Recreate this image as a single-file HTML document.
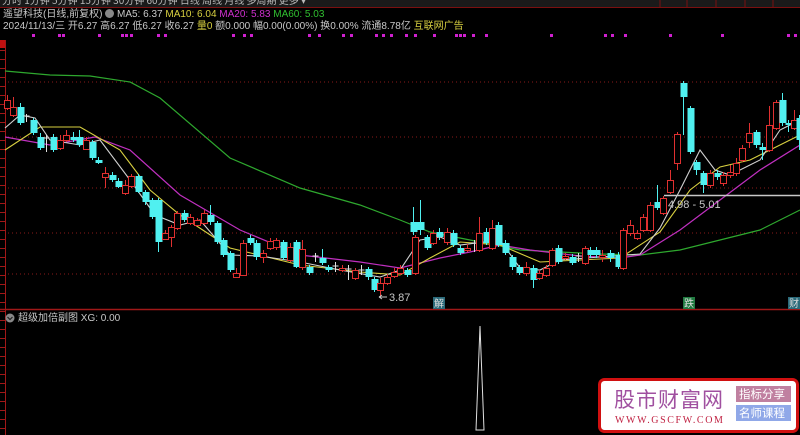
<!DOCTYPE html>
<html><head><meta charset="utf-8"><style>
html,body{margin:0;padding:0;background:#000;width:800px;height:435px;overflow:hidden}
body{position:relative;font-family:"Liberation Sans","Noto Sans CJK SC",sans-serif}
.t{position:absolute;white-space:nowrap;font-size:10px;line-height:12px}
</style></head><body>
<svg id="s" width="800" height="435" style="position:absolute;left:0;top:0" xmlns="http://www.w3.org/2000/svg">
<rect width="800" height="435" fill="#000"/>
<g fill="#1a1a1a"><rect x="0" y="0" width="800" height="7"/></g>
<text x="2" y="4" fill="#bbb" font-size="10" font-family="Noto Sans CJK SC">分时  1分钟  5分钟  15分钟  30分钟  60分钟  日线  周线  月线  多周期  更多 ▾</text>
<g stroke="#7a1010" stroke-width="1"><line x1="660" y1="0" x2="660" y2="7"/><line x1="687" y1="0" x2="687" y2="7"/><line x1="716" y1="0" x2="716" y2="7"/><line x1="745" y1="0" x2="745" y2="7"/><line x1="773" y1="0" x2="773" y2="7"/></g>
<line x1="0" y1="7.5" x2="800" y2="7.5" stroke="#7a1010"/>
<g stroke="#8a1a1a" stroke-dasharray="1,3"><line x1="8" y1="82" x2="800" y2="82"/><line x1="8" y1="137" x2="800" y2="137"/><line x1="8" y1="188" x2="800" y2="188"/><line x1="8" y1="233" x2="800" y2="233"/><line x1="8" y1="274" x2="800" y2="274"/></g>
<line x1="0" y1="309.5" x2="800" y2="309.5" stroke="#a01818" stroke-width="1.5"/>
<line x1="5.5" y1="40" x2="5.5" y2="435" stroke="#a01818"/>
<rect x="0" y="40" width="5" height="8" fill="#c01010"/>
<g id="ticks" stroke="#a01818"></g>
<polyline fill="none" stroke="#2ea82e" stroke-width="1.2" points="5,71 50,75 90,76 130,82 160,98 230,158 300,188 360,205 400,220 430,232 470,240 520,250 560,252 600,254 640,255 680,250 720,240 760,230 800,210"/>
<polyline fill="none" stroke="#c030c0" stroke-width="1.2" points="5,137 50,145 95,137 130,150 180,195 240,230 300,255 360,262 400,268 440,258 470,252 500,245 530,250 580,256 620,258 640,255 680,230 720,200 760,170 800,145"/>
<polyline fill="none" stroke="#d8d040" stroke-width="1.1" points="5,150 40,127 80,127 120,150 150,190 180,215 230,248 300,265 360,272 400,275 430,258 460,242 500,245 540,262 580,260 620,258 660,232 690,190 720,167 750,160 780,145 800,135"/>
<polyline fill="none" stroke="#d0d0d0" stroke-width="1.1" points="5,128 20,115 35,118 50,140 80,145 100,140 130,180 155,215 180,225 200,220 230,255 260,256 300,262 340,270 380,277 400,270 420,240 440,237 460,245 500,240 520,268 540,270 560,260 600,257 640,254 660,228 680,190 700,150 715,170 730,175 760,160 780,130 800,120"/>
<g id="c"></g>
<line x1="664" y1="195.5" x2="800" y2="195.5" stroke="#c8c8c8" stroke-width="1.5"/>
<text x="668" y="208" fill="#c8c8c8" font-size="11" font-family="Liberation Sans">4.98 - 5.01</text>
<path d="M379,297 H387 M379,297 L382,295 M379,297 L382,299" stroke="#c8c8c8" fill="none"/>
<text x="389" y="301" fill="#c8c8c8" font-size="11" font-family="Liberation Sans">3.87</text>
<rect x="433" y="297" width="12" height="12" fill="#2a6a7a"/><text x="434" y="307" fill="#ddd" font-size="10" font-family="Noto Sans CJK SC">解</text>
<rect x="683" y="297" width="12" height="12" fill="#207a40"/><text x="684" y="307" fill="#ddd" font-size="10" font-family="Noto Sans CJK SC">跌</text>
<rect x="788" y="297" width="12" height="12" fill="#2a6a7a"/><text x="789" y="307" fill="#ddd" font-size="10" font-family="Noto Sans CJK SC">财</text>
<circle cx="10" cy="318" r="4.5" fill="#888"/><path d="M7.5,317 L10,319.5 L12.5,317" stroke="#222" fill="none" stroke-width="1.2"/>
<polygon points="476,430 480,326 484,430" fill="none" stroke="#e0e0e0" stroke-width="1"/>
<rect x="599.5" y="379.5" width="198" height="52" rx="5" fill="#fff" stroke="#d01010" stroke-width="3"/>
<text x="614" y="407" font-size="21" fill="#a050a0" font-family="Noto Sans CJK SC" letter-spacing="1">股市财富网</text>
<text x="615" y="423" font-size="10" fill="#c02040" font-family="Liberation Serif" letter-spacing="1.6">WWW.GSCFW.COM</text>
<rect x="736" y="386" width="55" height="16" fill="#c080a0"/>
<text x="739" y="398" font-size="11.5" fill="#fff" font-family="Noto Sans CJK SC">指标分享</text>
<rect x="736" y="405" width="55" height="16" fill="#90a8e8"/>
<text x="739" y="417" font-size="11.5" fill="#fff" font-family="Noto Sans CJK SC">名师课程</text>
</svg>
<div class="t" style="left:3px;top:9px;color:#c8c8c8">遥望科技(日线,前复权) <span style="display:inline-block;width:9px;height:9px;border-radius:5px;background:#888;vertical-align:-1px"></span> MA5: 6.37 <span style="color:#d8d040">MA10: 6.04</span> <span style="color:#d030d0">MA20: 5.83</span> <span style="color:#30c030">MA60: 5.03</span></div>
<div class="t" style="left:3px;top:21px;color:#c8c8c8">2024/11/13/三 开6.27 高6.27 低6.27 收6.27 <span style="color:#d8d040">量0</span> 额0.000 幅0.00(0.00%) 换0.00% 流通8.78亿 <span style="color:#d8d040">互联网广告</span></div>
<div class="t" style="left:18px;top:313px;color:#c8c8c8">超级加倍副图 XG: 0.00</div>
<script>
var C=[[7,100,108,95,110,1],[13,107,115,97,117,1],[20,107,123,103,125,0],[26,116,118,114,122,2],[33,120,133,118,135,0],[40,137,148,133,150,0],[46,138,150,135,152,2],[53,137,150,134,152,0],[60,140,148,135,150,1],[66,135,140,130,142,1],[73,137,140,132,142,0],[79,137,145,130,147,0],[86,140,149,137,150,1],[92,142,158,140,160,0],[98,160,163,157,164,0],[105,173,177,167,188,1],[112,175,180,172,182,0],[118,181,187,178,188,0],[125,185,193,180,195,1],[131,176,186,174,188,1],[138,176,192,174,193,0],[145,192,202,190,205,0],[152,200,217,198,219,0],[158,200,242,198,252,0],[165,233,239,230,240,1],[171,227,237,225,247,1],[177,213,228,211,230,1],[184,213,220,210,222,0],[190,217,223,214,225,1],[197,220,225,218,226,1],[204,213,223,210,225,1],[210,215,222,205,225,0],[217,223,242,221,244,0],[223,240,255,238,257,0],[230,253,270,251,272,0],[236,273,277,268,278,1],[243,243,275,240,276,1],[250,238,243,235,245,0],[256,243,257,240,260,0],[263,253,257,250,263,1],[270,241,248,238,250,1],[276,240,247,238,250,1],[283,242,258,240,260,0],[290,247,260,243,262,1],[296,242,267,240,268,0],[302,249,267,240,270,1],[309,267,273,265,275,0],[315,256,257,253,262,2],[322,258,263,249,265,0],[328,267,270,265,272,0],[335,266,270,262,272,2],[342,268,270,265,272,1],[348,269,278,265,280,2],[355,270,278,268,280,1],[361,270,271,265,275,2],[368,269,277,267,280,0],[374,279,290,277,292,0],[380,283,290,278,297,1],[387,277,283,274,285,1],[394,272,276,268,278,1],[400,268,273,265,275,1],[407,270,275,268,277,0],[415,237,273,235,275,1],[413,222,232,207,235,0],[420,222,230,200,235,0],[427,237,248,235,250,0],[433,233,243,230,245,1],[439,232,237,228,240,0],[447,232,242,228,245,1],[453,233,245,230,247,0],[460,248,253,245,255,0],[467,248,250,244,252,1],[474,243,250,240,252,2],[479,233,250,217,252,1],[486,232,243,228,245,0],[492,228,248,220,250,1],[498,225,245,222,247,0],[505,243,253,240,255,0],[512,257,267,255,270,0],[519,267,273,265,275,0],[526,267,273,262,276,1],[533,268,280,265,288,0],[539,273,278,270,280,1],[546,268,275,265,277,1],[552,250,265,248,267,1],[558,248,262,245,264,0],[565,256,258,253,260,1],[572,257,263,254,265,0],[578,256,257,253,262,2],[585,248,263,246,265,1],[590,250,255,247,258,0],[596,250,255,247,258,0],[602,255,257,250,262,1],[610,253,258,250,262,0],[618,255,267,252,269,0],[623,230,268,228,270,1],[630,225,233,220,236,1],[637,233,238,230,240,1],[643,217,230,214,232,1],[650,205,230,202,232,1],[657,202,208,185,210,0],[663,198,213,196,215,1],[670,180,192,170,194,1],[677,134,163,132,170,1],[683,83,97,81,135,0],[690,108,152,106,154,0],[696,162,170,160,175,0],[703,173,185,171,193,0],[710,173,185,170,188,1],[717,173,177,170,180,0],[723,175,183,172,186,1],[730,172,175,165,178,1],[736,163,173,158,176,1],[742,148,160,145,162,1],[749,133,142,123,148,1],[756,132,145,130,148,0],[762,147,150,143,160,0],[769,125,150,106,152,1],[776,102,128,100,130,1],[782,100,123,93,126,0],[788,123,125,120,132,0],[794,120,128,110,130,1],[799,118,140,115,150,0]];
var g=document.getElementById('c'),h='';
C.forEach(function(c){var x=c[0],t=c[1],b=c[2],hi=c[3],lo=c[4],u=c[5];
var col=u==1?'#e03030':(u==0?'#50f0f0':'#e0e0e0');
h+='<line x1="'+(x+.5)+'" y1="'+hi+'" x2="'+(x+.5)+'" y2="'+lo+'" stroke="'+col+'"/>';
if(u==1)h+='<rect x="'+(x-2.5)+'" y="'+(t+.5)+'" width="6" height="'+Math.max(1,b-t)+'" fill="#000" stroke="'+col+'"/>';
else if(u==0)h+='<rect x="'+(x-2.5)+'" y="'+t+'" width="7" height="'+Math.max(1,b-t)+'" fill="'+col+'"/>';
else h+='<line x1="'+(x-2.5)+'" y1="'+t+'" x2="'+(x+3.5)+'" y2="'+t+'" stroke="'+col+'"/>';});
g.innerHTML=h;
var d=[32,58,62,98,121,125,130,157,164,232,243,250,308,318,342,350,375,382,390,405,414,433,455,459,463,472,485,550,604,611,624,669,721,787,794],s='';
d.forEach(function(x){s+='<rect x="'+x+'" y="34" width="3" height="3" fill="#d020d0"/>';});
var tk='';for(var y=50;y<435;y+=9){tk+='<line x1="0" y1="'+y+'.5" x2="5" y2="'+y+'.5"/>';}
document.getElementById('ticks').innerHTML=tk;
g.insertAdjacentHTML('beforeend',s);
</script>
</body></html>
